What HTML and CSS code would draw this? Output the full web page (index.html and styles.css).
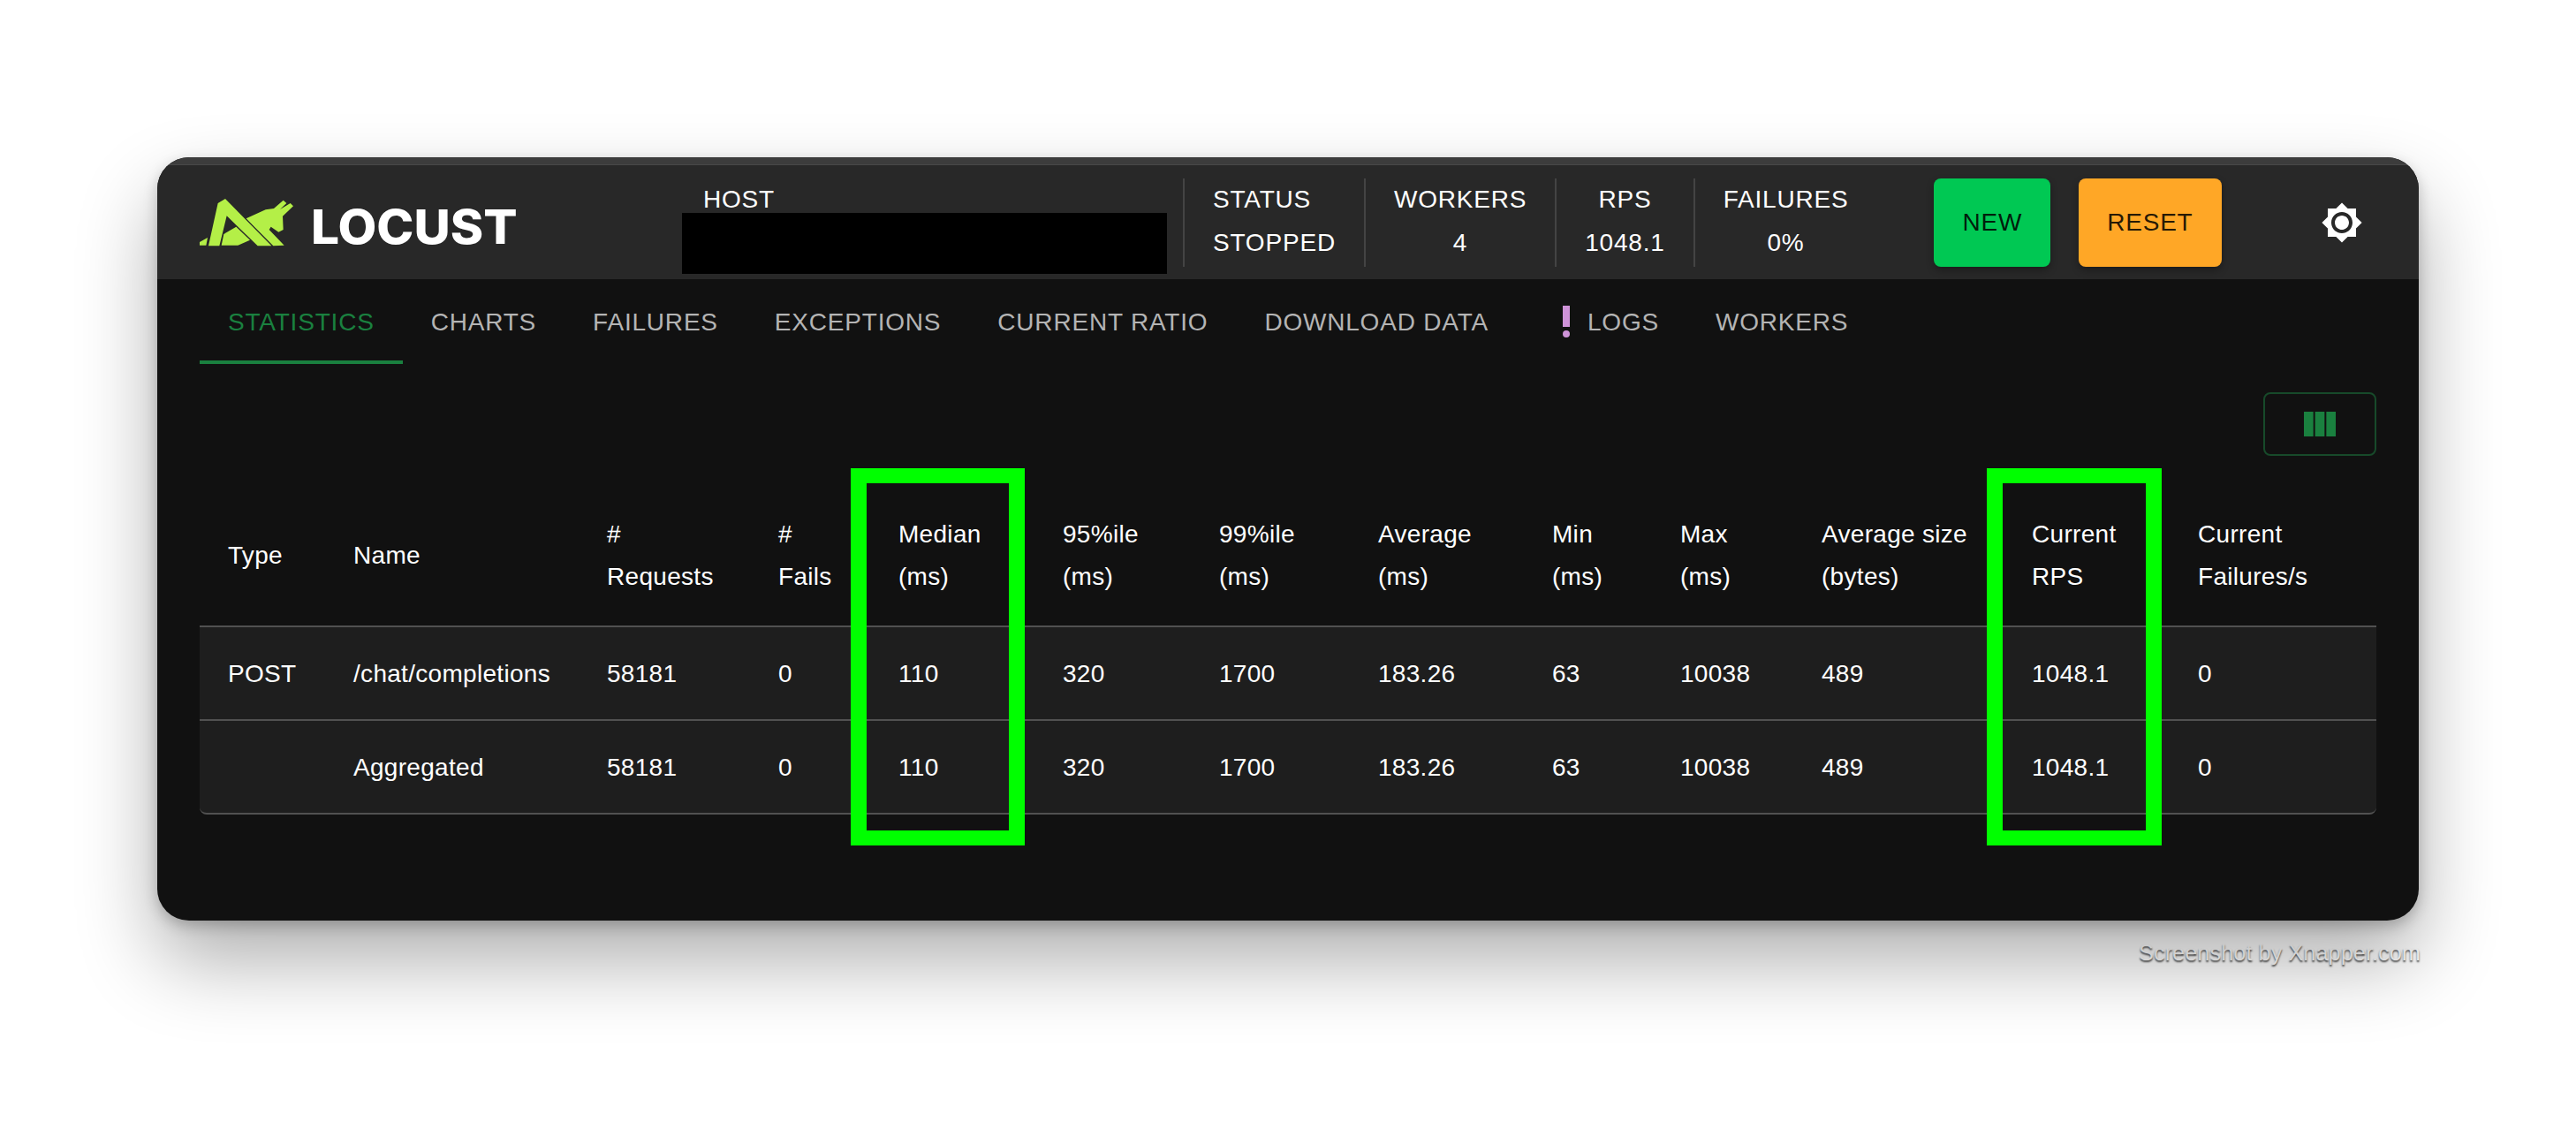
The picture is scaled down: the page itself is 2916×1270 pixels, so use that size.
FILE: index.html
```html
<!DOCTYPE html>
<html>
<head>
  <title>Locust</title>
  <link rel="stylesheet" href="styles.css">
</head>
<body>
  <div class="shot">
    <div class="window">
      <div class="title-strip"></div>

      <header class="navbar">
        <div class="brand">
          <svg class="brand-logo" viewBox="48 45 318 162" width="106" height="54">
            <polygon points="48,203 48,192 75,177 70,203"/>
            <polygon points="78,205 110,60 135,45 292,205 245,205 140,103 115,205"/>
            <polygon points="122,203 130,165 172,140 219,185 178,203"/>
            <polygon points="206,112 272,82 300,78 332,50 343,60 321,81 356,60 366,70 330,104 332,150 316,158 290,140 284,150 335,203 298,205"/>
          </svg>
          <span class="brand-name">LOCUST</span>
        </div>

        <div class="stat host">
          <span>HOST</span>
          <div class="host-mask"></div>
        </div>
        <div class="stat stat-left">
          <span>STATUS</span>
          <span>STOPPED</span>
        </div>
        <div class="stat">
          <span>WORKERS</span>
          <span>4</span>
        </div>
        <div class="stat">
          <span>RPS</span>
          <span>1048.1</span>
        </div>
        <div class="stat stat-last">
          <span>FAILURES</span>
          <span>0%</span>
        </div>

        <div class="actions">
          <button class="btn btn-new">NEW</button>
          <button class="btn btn-reset">RESET</button>
        </div>

        <svg class="theme-icon" viewBox="0 0 24 24" width="48" height="48">
          <path d="M20 8.69V4h-4.69L12 .69 8.69 4H4v4.69L.69 12 4 15.31V20h4.69L12 23.31 15.31 20H20v-4.69L23.31 12 20 8.69zM12 18c-3.31 0-6-2.69-6-6s2.69-6 6-6 6 2.69 6 6-2.69 6-6 6zm0-10c-2.21 0-4 1.79-4 4s1.79 4 4 4 4-1.79 4-4-1.79-4-4-4z"/>
        </svg>
      </header>

      <nav class="tabs">
        <a class="tab active">Statistics</a>
        <a class="tab">Charts</a>
        <a class="tab">Failures</a>
        <a class="tab">Exceptions</a>
        <a class="tab">Current ratio</a>
        <a class="tab">Download data</a>
        <a class="tab">
          <svg class="tab-icon" viewBox="0 0 24 24" width="48" height="48">
            <circle cx="12" cy="19" r="2"/>
            <path d="M10 3h4v12h-4z"/>
          </svg>
          Logs
        </a>
        <a class="tab">Workers</a>
      </nav>

      <main class="content">
        <div class="toolbar">
          <button class="columns-btn">
            <svg viewBox="0 0 24 24" width="48" height="48">
              <path d="M14.67 5v14H9.33V5h5.34zm1 14H21V5h-5.33v14zm-7.34 0V5H3v14h5.33z"/>
            </svg>
          </button>
        </div>

        <table class="stats">
          <colgroup>
            <col class="c-type"><col class="c-name"><col class="c-req"><col class="c-fails">
            <col class="c-median"><col class="c-p95"><col class="c-p99"><col class="c-avg">
            <col class="c-min"><col class="c-max"><col class="c-size"><col class="c-rps">
            <col class="c-frate">
          </colgroup>
          <thead>
            <tr>
              <th>Type</th>
              <th>Name</th>
              <th># <br>Requests</th>
              <th># <br>Fails</th>
              <th>Median <br>(ms)</th>
              <th>95%ile <br>(ms)</th>
              <th>99%ile <br>(ms)</th>
              <th>Average <br>(ms)</th>
              <th>Min <br>(ms)</th>
              <th>Max <br>(ms)</th>
              <th>Average size <br>(bytes)</th>
              <th>Current <br>RPS</th>
              <th>Current <br>Failures/s</th>
            </tr>
          </thead>
          <tbody>
            <tr>
              <td>POST</td>
              <td>/chat/completions</td>
              <td>58181</td>
              <td>0</td>
              <td>110</td>
              <td>320</td>
              <td>1700</td>
              <td>183.26</td>
              <td>63</td>
              <td>10038</td>
              <td>489</td>
              <td>1048.1</td>
              <td>0</td>
            </tr>
            <tr>
              <td></td>
              <td>Aggregated</td>
              <td>58181</td>
              <td>0</td>
              <td>110</td>
              <td>320</td>
              <td>1700</td>
              <td>183.26</td>
              <td>63</td>
              <td>10038</td>
              <td>489</td>
              <td>1048.1</td>
              <td>0</td>
            </tr>
          </tbody>
        </table>
      </main>

      <div class="highlight highlight-median"></div>
      <div class="highlight highlight-rps"></div>
    </div>

    <p class="credit">Screenshot by Xnapper.com</p>
  </div>
</body>
</html>
```

FILE: styles.css
```css
html, body {
  margin: 0;
  height: 100%;
  background: #fff;
  overflow: hidden;
}

body {
  font-family: "Liberation Sans", Arial, sans-serif;
  color: #fff;
}

.shot {
  width: 2560px;
  padding: 178px 0 0 178px;
}

.window {
  position: relative;
  height: 864px;
  background: #111;
  border-radius: 36px;
  overflow: hidden;
  box-shadow: 0 45px 90px rgba(0, 0, 0, 0.32), 0 6px 16px rgba(0, 0, 0, 0.22);
}

.title-strip {
  height: 8px;
  background: #3c3c3c;
  border-bottom: 1px solid #484848;
}

/* top bar */
.navbar {
  display: flex;
  align-items: center;
  height: 129px;
  padding-left: 48px;
  background: #282828;
  font-size: 28px;
  letter-spacing: 0.8px;
  line-height: 49px;
}

.brand {
  display: flex;
  align-items: center;
  width: 546px;
  height: 54px;
}

.brand-logo {
  fill: #b4ef47;
}

.brand-name {
  margin: 11px 0 0 20px;
  font-family: Inter, "Liberation Sans", sans-serif;
  font-size: 53px;
  font-weight: 800;
  line-height: 54px;
  letter-spacing: 0;
  color: #fff;
  transform: scaleX(1.07);
  transform-origin: left center;
}

.stat {
  display: flex;
  flex-direction: column;
  align-items: center;
  height: 100px;
  padding: 0 32px;
  border-right: 2px solid #444;
}

.stat span {
  position: relative;
  top: -1px;
}

.stat-left {
  align-items: flex-start;
}

.stat-last {
  border-right: 0;
}

.host {
  position: relative;
  box-sizing: border-box;
  width: 569px;
  padding-left: 24px;
  align-items: flex-start;
}

.host-mask {
  position: absolute;
  left: 0;
  top: 39px;
  width: 549px;
  height: 69px;
  background: #000;
}

.actions {
  display: flex;
  gap: 32px;
  margin-left: 65px;
}

.btn {
  height: 100px;
  padding: 0 32px;
  border: 0;
  border-radius: 8px;
  font-family: inherit;
  font-size: 28px;
  letter-spacing: 0.8px;
  color: rgba(0, 0, 0, 0.87);
  box-shadow: 0 4px 8px rgba(0, 0, 0, 0.3);
}

.btn-new {
  background: #00c853;
}

.btn-reset {
  background: #ffa726;
}

.theme-icon {
  margin-left: 112px;
  fill: #fff;
}

/* tabs */
.tabs {
  display: flex;
  height: 96px;
  padding-left: 48px;
}

.tab {
  display: flex;
  align-items: center;
  padding: 2px 32px 0;
  font-size: 28px;
  letter-spacing: 0.8px;
  text-transform: uppercase;
  color: #b4b4b4;
}

.tab.active {
  color: #1a803f;
  box-shadow: inset 0 -4px 0 #1a803f;
}

.tab-icon {
  fill: #ce93d8;
  margin-top: -2px;
}

/* table */
.content {
  padding: 32px 48px 0;
}

.toolbar {
  display: flex;
  justify-content: flex-end;
  margin-bottom: 34px;
}

.columns-btn {
  display: flex;
  align-items: center;
  justify-content: center;
  box-sizing: border-box;
  width: 128px;
  height: 72px;
  background: transparent;
  border: 2px solid #174a2a;
  border-radius: 8px;
}

.columns-btn svg {
  fill: #1a803f;
}

.stats {
  width: 100%;
  table-layout: fixed;
  border-collapse: separate;
  border-spacing: 0;
  font-size: 28px;
  letter-spacing: 0.3px;
}

.stats th,
.stats td {
  text-align: left;
  font-weight: normal;
  border-bottom: 2px solid #515151;
  white-space: nowrap;
}

.stats th {
  padding: 31px 32px;
  line-height: 48px;
}

.stats td {
  padding: 33px 32px 31px;
  line-height: 40px;
  background: #1e1e1e;
}

.stats tbody tr:last-child td:first-child {
  border-bottom-left-radius: 8px;
}

.stats tbody tr:last-child td:last-child {
  border-bottom-right-radius: 8px;
}

.c-type { width: 142px; }
.c-name { width: 287px; }
.c-req { width: 194px; }
.c-fails { width: 136px; }
.c-median { width: 186px; }
.c-p95 { width: 177px; }
.c-p99 { width: 180px; }
.c-avg { width: 197px; }
.c-min { width: 145px; }
.c-max { width: 160px; }
.c-size { width: 238px; }
.c-rps { width: 188px; }
.c-frate { width: 234px; }

/* green boxes drawn over the table */
.highlight {
  position: absolute;
  top: 352px;
  box-sizing: border-box;
  height: 427px;
  border: solid #00ff00;
  border-width: 17px 18px;
}

.highlight-median {
  left: 785px;
  width: 197px;
}

.highlight-rps {
  left: 2071px;
  width: 198px;
}

.credit {
  margin: 21px -2px 0 0;
  text-align: right;
  font-size: 25.4px;
  line-height: 30px;
  color: #fff;
  text-shadow: 0 2px 2px rgba(0, 0, 0, 0.7);
}
```
